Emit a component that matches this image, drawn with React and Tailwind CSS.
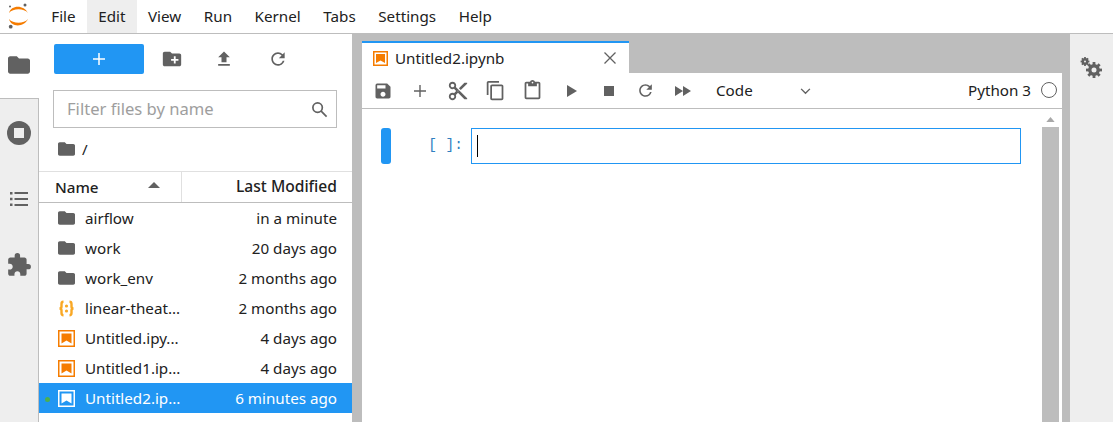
const F = "M10 4H4c-1.100 0-2 .9-2 2v12c0 1.100.9 2 2 2h16c1.100 0 2-.9 2-2V8c0-1.100-.9-2-2-2h-8l-2-2z";

function Folder({ className }) {
  return (
    <svg viewBox="2 4 20 16" className={className} fill="#616161">
      <path d={F} />
    </svg>
  );
}

function Nb({ white }) {
  const c = white ? "#ffffff" : "#f57c00";
  return (
    <svg viewBox="0 0 17 17" className="w-[17px] h-[17px]">
      <rect x="0.750" y="0.750" width="15.500" height="15.500" fill="none" stroke={c} strokeWidth="1.500" />
      <path d="M3.500 3.500h10v10L8.500 10.500 3.500 13.500z" fill={c} />
    </svg>
  );
}

function Json() {
  return (
    <svg viewBox="0 0 17 17" className="w-[17px] h-[17px]" fill="none" stroke="#f9a825" strokeWidth="2.400">
      <path d="M5.500 1.800C3.500 1.800 3.500 2.800 3.500 4v2.500C3.500 7.500 3 8.500 1.500 8.500 3 8.500 3.500 9.500 3.500 10.500V13c0 1.200 0 2.200 2 2.200" />
      <path d="M11.500 1.800c2 0 2 1 2 2.200v2.500c0 1 .5 2 2 2-1.500 0-2 1-2 2V13c0 1.200 0 2.200-2 2.200" />
      <circle cx="8.500" cy="6" r="1.600" fill="#f9a825" stroke="none" />
      <circle cx="8.500" cy="11" r="1.600" fill="#f9a825" stroke="none" />
    </svg>
  );
}

function I({ d, className = "w-5 h-5" }) {
  return (
    <svg viewBox="0 0 24 24" className={className} fill="#616161">
      <path d={d} />
    </svg>
  );
}

function Gear({ cx, cy, ring, sw, r1, r2, tw }) {
  const a = [0, 45, 90, 135, 180, 225, 270, 315];
  return (
    <g>
      <circle cx={cx} cy={cy} r={ring} fill="none" stroke="#616161" strokeWidth={sw} />
      {a.map((t) => {
        const c = Math.cos((t * Math.PI) / 180);
        const s = Math.sin((t * Math.PI) / 180);
        return (
          <line
            key={t}
            x1={cx + r1 * c}
            y1={cy + r1 * s}
            x2={cx + r2 * c}
            y2={cy + r2 * s}
            stroke="#616161"
            strokeWidth={tw}
          />
        );
      })}
    </g>
  );
}

const refresh = "M17.650 6.350A7.958 7.958 0 0 0 12 4c-4.420 0-7.990 3.580-7.990 8s3.570 8 7.990 8c3.730 0 6.840-2.550 7.730-6h-2.080A5.990 5.990 0 0 1 12 18c-3.310 0-6-2.690-6-6s2.690-6 6-6c1.660 0 3.140.69 4.220 1.780L13 11h7V4l-2.350 2.350z";

const files = [
  ["folder", "airflow", "in a minute"],
  ["folder", "work", "20 days ago"],
  ["folder", "work_env", "2 months ago"],
  ["json", "linear-theat...", "2 months ago"],
  ["nb", "Untitled.ipy...", "4 days ago"],
  ["nb", "Untitled1.ip...", "4 days ago"],
  ["active", "Untitled2.ip...", "6 minutes ago"],
];

export default function App() {
  return (
    <div className="w-[1113px] h-[422px] overflow-hidden flex flex-col bg-white text-[#212121] text-[15.200px] font-['Noto_Sans','Open_Sans',sans-serif]">
      <div className="h-[34px] shrink-0 flex border-b border-[#bdbdbd]">
        <div className="w-[40px] flex items-center pl-[7px]">
          <svg viewBox="0 0 24 28" className="w-[24px] h-[28px]">
            <path d="M2 10C4 1.500 17 1.500 21 10 17 5 6 5 2 10z" fill="#f57c00" />
            <path d="M2 16C4 24.500 17 24.500 21 16 17 21 6 21 2 16z" fill="#f57c00" />
            <circle cx="18" cy="2" r="1.500" fill="#616161" />
            <circle cx="3" cy="3.500" r="1" fill="#616161" />
            <circle cx="3.700" cy="23.700" r="1.900" fill="#616161" />
          </svg>
        </div>
        {["File", "Edit", "View", "Run", "Kernel", "Tabs", "Settings", "Help"].map((m) => (
          <div key={m} className={`flex items-center px-[11.300px] h-[33px] ${m === "Edit" ? "bg-[#eeeeee]" : ""}`}>
            {m}
          </div>
        ))}
      </div>

      <div className="flex-1 flex min-h-0">
        <div className="w-[39px] shrink-0 flex flex-col bg-[#eeeeee] border-r border-[#bdbdbd] relative">
          <div className="h-[65px] w-[39px] bg-white border-b border-[#bdbdbd] flex items-center justify-center pb-[2px] pr-[2px]">
            <Folder className="w-[22px] h-[18px]" />
          </div>
          <div className="h-[67px] flex items-center justify-center pr-px">
            <svg viewBox="0 0 24 24" className="w-[24px] h-[24px]">
              <circle cx="12" cy="12" r="12" fill="#616161" />
              <rect x="7" y="7" width="10" height="10" fill="#eeeeee" />
            </svg>
          </div>
          <div className="h-[66px] flex items-center justify-center pr-px">
            <I className="w-[24px] h-[24px]" d="M3 5h2.500v2.500H3zM7.500 5H21v2H7.500zM3 10.750h2.500v2.500H3zM7.500 11H21v2H7.500zM3 16.500h2.500V19H3zM7.500 17H21v2H7.500z" />
          </div>
          <div className="h-[66px] flex items-center justify-center pr-px">
            <I className="w-[26px] h-[26px]" d="M20.500 11H19V7c0-1.100-.9-2-2-2h-4V3.500a2.500 2.500 0 0 0-5 0V5H4c-1.100 0-1.990.9-1.990 2v3.800H3.500c1.490 0 2.700 1.210 2.700 2.700s-1.210 2.700-2.700 2.700H2V20c0 1.100.9 2 2 2h3.800v-1.500c0-1.490 1.210-2.700 2.700-2.700s2.700 1.210 2.700 2.700V22H17c1.100 0 2-.9 2-2v-4h1.500a2.500 2.500 0 0 0 0-5z" />
          </div>
        </div>

        <div className="w-[313px] shrink-0 flex flex-col bg-white">
          <div className="flex items-center h-[50px] pl-[15px] shrink-0">
            <div className="w-[90px] h-[30px] rounded-[2px] bg-[#2196f3] flex items-center justify-center">
              <svg viewBox="0 0 12 12" className="w-[12px] h-[12px]">
                <path d="M5.250 0h1.500v5.250H12v1.500H6.750V12h-1.500V6.750H0v-1.500h5.250z" fill="#fff" />
              </svg>
            </div>
            <div className="w-[56px] flex justify-center">
              <I className="w-[22px] h-[22px]" d="M20 6h-8l-2-2H4c-1.100 0-2 .9-2 2v12c0 1.100.9 2 2 2h16c1.100 0 2-.9 2-2V8c0-1.100-.9-2-2-2zm-1 8h-3v3h-2v-3h-3v-2h3V9h2v3h3v2z" />
            </div>
            <div className="w-[48px] flex justify-center">
              <I className="w-[20px] h-[20px]" d="M5 20h14v-2H5v2zm0-10h4v6h6v-6h4l-7-7-7 7z" />
            </div>
            <div className="w-[60px] flex justify-center">
              <I className="w-[20px] h-[20px]" d={refresh} />
            </div>
          </div>
          <div className="ml-[14px] mt-[6px] w-[284px] h-[38px] shrink-0 border border-[#bdbdbd] flex items-center justify-between pl-[13px] pr-[8px] text-[#9e9e9e] text-[16.600px]">
            <span>Filter files by name</span>
            <svg viewBox="0 0 18 18" className="w-[17px] h-[17px]" fill="none" stroke="#616161" strokeWidth="1.800">
              <circle cx="7" cy="7" r="5" />
              <path d="M10.500 10.500l6 6" />
            </svg>
          </div>
          <div className="flex items-center h-[32px] mt-[5px] pl-[19px] gap-[7px] shrink-0">
            <Folder className="w-[17px] h-[14px]" />
            <span>/</span>
          </div>
          <div className="h-[32px] mt-[6px] shrink-0 flex border-t border-b border-[#e0e0e0] border-b-[#bdbdbd] font-medium">
            <div className="w-[143px] border-r border-[#e0e0e0] flex items-center justify-between pl-[16px] pr-[21px]">
              <span>Name</span>
              <svg viewBox="0 0 12 6" className="w-[12px] h-[6px] mb-[5px]">
                <path d="M0 6L6 0l6 6z" fill="#616161" />
              </svg>
            </div>
            <div className="flex-1 flex items-center justify-end pr-[15px] text-[15.600px]">Last Modified</div>
          </div>
          <div className="flex flex-col">
            {files.map(([t, n, d]) => (
              <div
                key={n}
                className={`h-[30px] flex items-center relative pl-[19px] pr-[15px] ${t === "active" ? "bg-[#2196f3] text-white" : ""}`}
              >
                {t === "active" && <span className="absolute left-[6px] top-[14px] w-[5px] h-[5px] rounded-full bg-[#4caf50]" />}
                <span className="w-[17px] h-[17px] flex items-center justify-center shrink-0">
                  {t === "folder" && <Folder className="w-[17px] h-[14px]" />}
                  {t === "json" && <Json />}
                  {t === "nb" && <Nb />}
                  {t === "active" && <Nb white />}
                </span>
                <span className="ml-[10px] flex-1 pt-px">{n}</span>
                <span className="pt-px">{d}</span>
              </div>
            ))}
          </div>
        </div>

        <div className="flex-1 flex flex-col bg-[#bdbdbd] pl-[10px] pt-[7px]">
          <div className="h-[32px] shrink-0 w-[267px] bg-white border-t-[2px] border-[#2196f3] flex items-center pl-[11px] pr-[13px]">
            <svg viewBox="0 0 15 15" className="w-[15px] h-[15px]">
              <rect x="0.750" y="0.750" width="13.500" height="13.500" fill="none" stroke="#f57c00" strokeWidth="1.500" />
              <path d="M3 3h9v9L7.500 9.500 3 12z" fill="#f57c00" />
            </svg>
            <span className="ml-[7px] flex-1">Untitled2.ipynb</span>
            <svg viewBox="0 0 12 12" className="w-[12px] h-[12px]" stroke="#616161" strokeWidth="1.300">
              <path d="M0.500 0.500l11 11M11.500 0.500l-11 11" />
            </svg>
          </div>
          <div className="flex-1 min-h-0 bg-white flex flex-col w-[700px]">
            <div className="h-[36px] shrink-0 border-b border-[#bdbdbd] flex items-center">
              <div className="w-[41px] flex justify-center">
                <I className="w-[20px] h-[20px]" d="M17 3H5a2 2 0 0 0-2 2v14c0 1.100.9 2 2 2h14c1.100 0 2-.9 2-2V7l-4-4zm-5 16c-1.660 0-3-1.340-3-3s1.340-3 3-3 3 1.340 3 3-1.340 3-3 3zm3-10H5V5h10v4z" />
              </div>
              <div className="w-[34px] flex justify-center">
                <svg viewBox="0 0 12 12" className="w-[12px] h-[12px]"><path d="M5.300 0h1.400v5.300H12v1.400H6.700V12H5.300V6.700H0V5.300h5.300z" fill="#616161" /></svg>
              </div>
              <div className="w-[41px] flex justify-center">
                <I className="w-[22px] h-[22px]" d="M9.640 7.640c.23-.5.36-1.050.36-1.640 0-2.210-1.790-4-4-4S2 3.790 2 6s1.790 4 4 4c.59 0 1.140-.13 1.640-.36L10 12l-2.360 2.360C7.140 14.130 6.590 14 6 14c-2.210 0-4 1.790-4 4s1.790 4 4 4 4-1.790 4-4c0-.59-.13-1.140-.36-1.640L12 14l7 7h3v-1L9.640 7.640zM6 8c-1.100 0-2-.89-2-2s.9-2 2-2 2 .89 2 2-.9 2-2 2zm0 12c-1.100 0-2-.89-2-2s.9-2 2-2 2 .89 2 2-.9 2-2 2zm6-7.500c-.28 0-.5-.22-.5-.5s.22-.5.500-.5.500.22.500.5-.22.500-.5.500zM19 3l-6 6 2 2 7-7V3h-3z" />
              </div>
              <div className="w-[34px] flex justify-center">
                <I className="w-[21px] h-[21px]" d="M16 1H4c-1.100 0-2 .9-2 2v14h2V3h12V1zm3 4H8c-1.100 0-2 .9-2 2v14c0 1.100.9 2 2 2h11c1.100 0 2-.9 2-2V7c0-1.100-.9-2-2-2zm0 16H8V7h11v14z" />
              </div>
              <div className="w-[41px] flex justify-center">
                <I className="w-[21px] h-[21px]" d="M19 2h-4.180C14.400.84 13.300 0 12 0c-1.300 0-2.400.84-2.820 2H5c-1.100 0-2 .9-2 2v16c0 1.100.9 2 2 2h14c1.100 0 2-.9 2-2V4c0-1.100-.9-2-2-2zm-7 0c.55 0 1 .45 1 1s-.45 1-1 1-1-.45-1-1 .45-1 1-1zm7 18H5V4h2v3h10V4h2v16z" />
              </div>
              <div className="w-[37px] flex justify-center">
                <svg viewBox="0 0 10 12" className="w-[10px] h-[12px]"><path d="M0 0l10 6-10 6z" fill="#616161" /></svg>
              </div>
              <div className="w-[37px] flex justify-center">
                <span className="block w-[10px] h-[10px] bg-[#616161]" />
              </div>
              <div className="w-[37px] flex justify-center">
                <I className="w-[19px] h-[19px]" d={refresh} />
              </div>
              <div className="w-[37px] flex justify-center">
                <svg viewBox="0 0 16 10" className="w-[16px] h-[10px]"><path d="M0 0l8 5-8 5zM8 0l8 5-8 5z" fill="#616161" /></svg>
              </div>
              <div className="w-[110px] pl-[15px] flex items-center justify-between">
                <span>Code</span>
                <svg viewBox="0 0 12 8" className="w-[11px] h-[7px] mt-[2px]" fill="none" stroke="#616161" strokeWidth="1.600">
                  <path d="M1 1l5 5 5-5" />
                </svg>
              </div>
              <div className="flex-1 flex items-center justify-end pr-[5px]">
                <span>Python 3</span>
                <span className="ml-[10px] w-[16px] h-[16px] rounded-full border-[1.500px] border-[#616161]" />
              </div>
            </div>
            <div className="flex-1 min-h-0 flex">
              <div className="flex-1 pt-[19px] flex items-start pl-[19px] pr-[20px]">
                <div className="w-[10px] h-[36px] rounded-[3px] bg-[#2196f3]" />
                <div className="w-[80px] h-[36px] pr-[8px] flex items-center justify-end text-[#307fc1] text-[14.500px] font-['Liberation_Mono',monospace]">[ ]:</div>
                <div className="flex-1 h-[36px] border border-[#2196f3] flex items-center pl-[5px]">
                  <span className="w-px h-[22px] bg-black" />
                </div>
              </div>
              <div className="w-[19px] shrink-0 mr-[2px] flex flex-col items-center pt-[8px]">
                <svg viewBox="0 0 10 6" className="w-[9px] h-[5px]"><path d="M0 6L5 0l5 6z" fill="#a8a8a8" /></svg>
                <div className="mt-[5px] w-[17px] flex-1 bg-[#bdbdbd]" />
              </div>
            </div>
          </div>
        </div>

        <div className="w-[43px] shrink-0 bg-[#eeeeee] flex justify-center pt-[22px]">
          <svg viewBox="0 0 24 24" className="w-[24px] h-[24px]">
            <Gear cx={5} cy={5.500} ring={2.200} sw={2.400} r1={2.800} r2={4.400} tw={1.800} />
            <Gear cx={14} cy={14} ring={4.200} sw={3.400} r1={4.500} r2={8} tw={2.800} />
          </svg>
        </div>
      </div>
    </div>
  );
}
